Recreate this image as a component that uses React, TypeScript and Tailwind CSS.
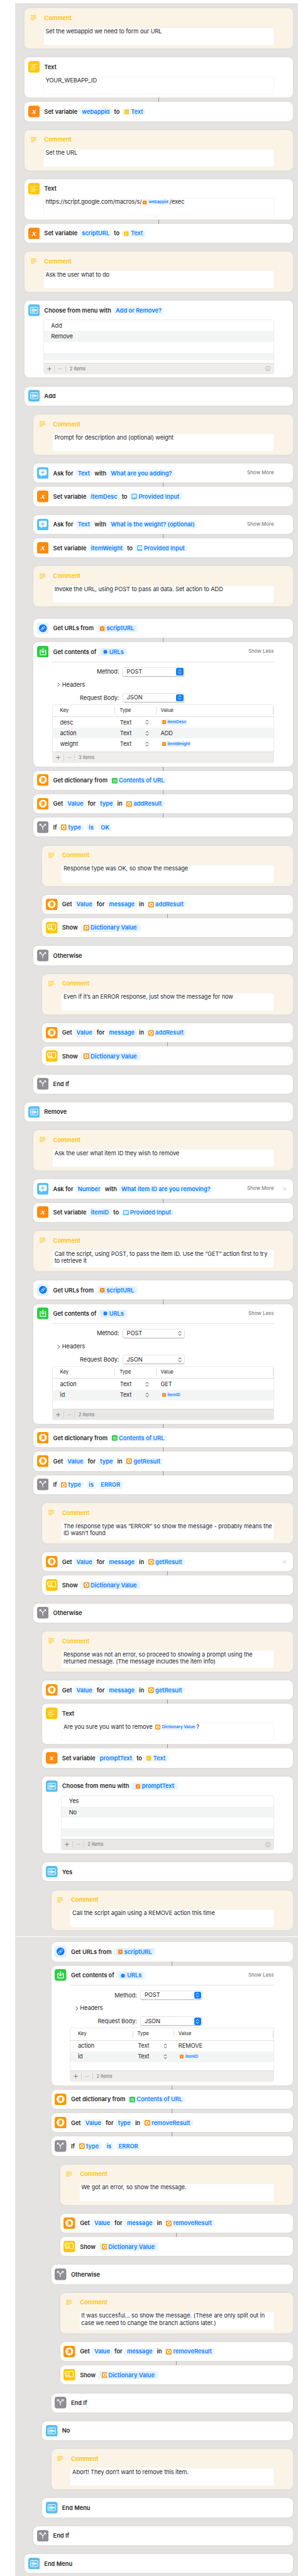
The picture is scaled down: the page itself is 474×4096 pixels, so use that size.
import React from "react";

type IconName = "text" | "x" | "menu" | "ask" | "link" | "download" | "dict" | "branch" | "show";

const tileColors: Record<IconName, string> = {
  text: "#ffc600",
  x: "#fe8a11",
  menu: "#56bff0",
  ask: "#56bff0",
  link: "#e2f0ff",
  download: "#29cd41",
  dict: "#fe9500",
  branch: "#8e8e93",
  show: "#ffc600",
};

function Icon({ name, size }: { name: IconName; size: string }) {
  return (
    <svg viewBox="0 0 26 26" className={`block shrink-0 ${size}`}>
      <rect width="26" height="26" rx="5.5" fill={tileColors[name]} />
      {name === "text" && (
        <g stroke="#fff3c4" strokeWidth="1.7" strokeLinecap="round">
          <path d="M6 7.4h13.5M6 11.3h8.4M6 15.4h13.5M6 19.3h8.4" />
        </g>
      )}
      {name === "x" && (
        <text x="13" y="18.2" textAnchor="middle" fontFamily="Liberation Serif, serif" fontStyle="italic" fontWeight="700" fontSize="18" fill="#fff">
          x
        </text>
      )}
      {name === "menu" && (
        <g>
          <rect x="4.8" y="6.3" width="16.4" height="13.4" rx="1.6" fill="none" stroke="#fff" strokeWidth="1.4" />
          <path d="M8 9.6h6M8 16.6h6" stroke="#fff" strokeWidth="1.1" strokeLinecap="round" />
          <rect x="7" y="11.3" width="12" height="3.5" rx=".8" fill="#fff" />
          <path d="M8 13.1h4" stroke="#9bd8f6" strokeWidth="1.2" />
        </g>
      )}
      {name === "ask" && (
        <g>
          <path d="M7 4.6h12a2.6 2.6 0 0 1 2.6 2.6v8a2.6 2.6 0 0 1-2.6 2.6h-6.6L8.2 21v-3.2H7a2.6 2.6 0 0 1-2.6-2.6v-8A2.6 2.6 0 0 1 7 4.6z" fill="#fff" />
          <path d="M12.6 7.9v7M9.1 11.4h7" stroke="#56bff0" strokeWidth="1.6" strokeLinecap="round" />
        </g>
      )}
      {name === "link" && (
        <g>
          <circle cx="13" cy="12.6" r="8.7" fill="#0a7aff" />
          <g transform="rotate(-45 13 12.6)" fill="none" stroke="#fff" strokeWidth="1.1">
            <rect x="7.6" y="10.8" width="6.4" height="3.8" rx="1.9" />
            <rect x="12" y="10.8" width="6.4" height="3.8" rx="1.9" />
          </g>
        </g>
      )}
      {name === "download" && (
        <g fill="none" stroke="#fff" strokeWidth="1.7" strokeLinecap="round" strokeLinejoin="round">
          <path d="M10 9.5H6.9v10.3h12.4V9.5h-3.1" />
          <path d="M13.1 5.4v9.4M10.2 12.2l2.9 2.9 2.9-2.9" />
        </g>
      )}
      {name === "dict" && (
        <g>
          <circle cx="13" cy="12.6" r="8.7" fill="#fff" />
          <rect x="9.4" y="7.9" width="7.3" height="9.6" rx=".9" fill="#fe9500" />
          <path d="M11.2 8.6v6.6M10.6 16h5.6" stroke="#fff" strokeWidth=".8" />
        </g>
      )}
      {name === "branch" && (
        <g fill="none" stroke="#fff" strokeWidth="1.5" strokeLinecap="round" strokeLinejoin="round">
          <path d="M12.6 18.6v-4.5c0-2.6-2.5-4-5.2-6.6M12.6 14.1c0-2.6 2.5-4 5.2-6.6" />
          <path d="M5.6 9.6V6h3.4zM19.6 9.6V6h-3.4z" fill="#fff" strokeWidth=".8" />
        </g>
      )}
      {name === "show" && (
        <g fill="none" stroke="#fff" strokeWidth="1.5" strokeLinecap="round">
          <path d="M13 4.9h6.6a2 2 0 0 1 2 2v8.4a2 2 0 0 1-2 2h-1.4M5.2 15.5a2 2 0 0 0 1.8 1.8h5" />
          <circle cx="8" cy="9.7" r="4.9" />
          <path d="M11.6 13.2l4.4 4.6" strokeWidth="2" />
          <path d="M5.9 8.8h4.2M5.9 10.9h3" strokeWidth="1" />
        </g>
      )}
    </svg>
  );
}

/** Small icon shown in front of a variable's name. */
function MiniIcon({ name }: { name: IconName }) {
  if (name === "link")
    return (
      <svg viewBox="0 0 9 9" className="block size-[9px] shrink-0">
        <rect width="9" height="9" rx="2" fill="#d3e7ff" />
        <circle cx="4.5" cy="4.5" r="2.9" fill="#0a7aff" />
        <path d="M3.7 5.3l1.6-1.6" stroke="#8fc2ff" strokeWidth=".7" />
      </svg>
    );
  const small = name === "x" || name === "text";
  return (
    <span className="flex size-[9px] shrink-0 items-center justify-center">
      <Icon name={name} size={small ? "size-[7.4px]" : "size-[8.8px]"} />
    </span>
  );
}

const Pill = ({ children }: { children: string }) => (
  <span className="flex h-[13.2px] items-center rounded-[2.5px] bg-[#eff7ff] px-[3.5px] text-[#067aff]">{children}</span>
);

const VarPill = ({ icon, children }: { icon: IconName; children: string }) => (
  <span className="flex h-[10.7px] items-center gap-[2.3px] rounded-[2.5px] bg-[#edf5ff] pr-[4.4px] pl-[3px] text-[#1480ff]">
    <MiniIcon name={icon} />
    {children}
  </span>
);

const NestedPill = ({ icon, children }: { icon: IconName; children: string }) => (
  <span className="flex h-[13.2px] items-center rounded-[2.5px] bg-[#eff7ff] px-[3.5px]">
    <span className="flex h-[10.6px] items-center gap-[1.9px] rounded-[2.5px] bg-[#e1efff] pr-[3px] pl-[2.4px] text-[#0f7dff]">
      <MiniIcon name={icon} />
      {children}
    </span>
  </span>
);

const InlineVar = ({ icon, children }: { icon: IconName; children: string }) => (
  <span className="inline-flex h-[9.4px] items-center gap-[2.5px] rounded-[2px] bg-[#edf5ff] px-[2.1px] align-middle text-[6.6px] leading-none font-semibold tracking-normal text-[#1480ff]">
    <Icon name={icon} size={icon === "dict" ? "size-[8px]" : "size-[6.3px]"} />
    {children}
  </span>
);

const indents = ["ml-[15.4px]", "ml-[29.6px]", "ml-[43.8px]", "ml-[58px]", "ml-[72.2px]"];
const gaps = {
  none: "",
  normal: "mt-[14.2px]",
  wide: "mt-[19.6px]",
  medium: "mt-[15.4px]",
};

type Common = { level?: number; gap?: keyof typeof gaps; linked?: boolean };

const Connector = ({ level }: { level: number }) => (
  <div className={`mr-[8.5px] flex h-[7.1px] shrink-0 justify-center ${indents[level]}`}>
    <div className="w-[1.3px] bg-[#9a9aa0]" />
  </div>
);

function Card({
  level = 0,
  gap = "normal",
  linked,
  height = "h-[30.19px]",
  bg = "bg-white",
  children,
}: Common & { height?: string; bg?: string; children: React.ReactNode }) {
  return (
    <>
      {linked && <Connector level={level} />}
      <section
        className={`mr-[8.5px] flex shrink-0 flex-col rounded-[8px] shadow-[0_0_5px_rgba(0,0,0,0.045)] ${height} ${bg} ${indents[level]} ${linked ? "" : gaps[gap]}`}
      >
        {children}
      </section>
    </>
  );
}

function Header({ icon, toggle, close, children }: { icon: IconName; toggle?: string; close?: boolean; children: React.ReactNode }) {
  return (
    <header className="flex h-[30px] shrink-0 items-center pl-[5.7px]">
      <Icon name={icon} size="size-[18.5px]" />
      <div className="ml-[7.2px] flex items-center gap-[3.6px] pt-[0.8px] text-[9.25px] font-semibold whitespace-nowrap">{children}</div>
      {toggle && <span className="mr-[29.9px] ml-auto text-[7.9px] font-medium text-[#828282]">{toggle}</span>}
      {close && (
        <svg viewBox="0 0 8 8" className={toggle ? "mr-[9.7px] -ml-[16.7px] size-[7px]" : "mr-[9.7px] ml-auto size-[7px]"}>
          <path d="M1 1l6 6M7 1L1 7" stroke="#b9b9b9" strokeWidth=".9" />
        </svg>
      )}
    </header>
  );
}

type RowProps = Common & { icon: IconName; toggle?: string; close?: boolean; children: React.ReactNode };

const Row = ({ icon, toggle, close, children, ...rest }: RowProps) => (
  <Card {...rest}>
    <Header icon={icon} toggle={toggle} close={close}>
      {children}
    </Header>
  </Card>
);

const TextBox = ({ children }: { children: React.ReactNode }) => (
  <div className="mx-[29.9px] h-[28.8px] rounded-[3px] bg-white pt-[0.4px] pl-[3.6px] text-[9.25px] leading-[11.5px] tracking-[-0.08px] whitespace-pre shadow-[inset_0_0_0_0.8px_rgba(0,0,0,0.05)]">
    {children}
  </div>
);

const Comment = ({ children, ...rest }: Common & { children: string }) => (
  <Card {...rest} height="h-[63.9px]" bg="bg-[#fbf4e6]">
    <div className="flex h-[30.2px] shrink-0 items-center pl-[9.7px] text-[#ffc107]">
      <svg viewBox="0 0 9 8" className="h-[8px] w-[9px]">
        <path d="M0 .6h9M0 2.9h9M0 5.2h9M0 7.4h5.5" stroke="currentColor" strokeWidth=".9" />
      </svg>
      <span className="ml-[12.7px] pt-[0.8px] text-[9.25px] font-semibold">Comment</span>
    </div>
    <TextBox>{children}</TextBox>
  </Card>
);

const TextAction = ({ children, ...rest }: Common & { children: React.ReactNode }) => (
  <Card {...rest} height="h-[63.9px]">
    <Header icon="text">
      <span>Text</span>
    </Header>
    <TextBox>{children}</TextBox>
  </Card>
);

function ListFooter({ count, info, dark }: { count: number; info?: boolean; dark?: boolean }) {
  return (
    <div className={`flex h-[17px] shrink-0 items-center border-t-[0.7px] border-[#d9d9d9] text-[7.5px] text-[#6f6f6f] ${dark ? "bg-[#e8e7e6]" : "bg-[#eeedeb]"}`}>
      <span className="flex w-[16.6px] justify-center">
        <svg viewBox="0 0 8 8" className="size-[7px]">
          <path d="M4 .3v7.4M.3 4h7.4" stroke="#666" strokeWidth=".9" />
        </svg>
      </span>
      <span className="h-[11px] w-[1px] bg-[#d2d2d2]" />
      <span className="flex w-[16.8px] justify-center">
        <svg viewBox="0 0 8 8" className="size-[7px]">
          <path d="M.3 4h7.4" stroke="#b8b8b8" strokeWidth=".9" />
        </svg>
      </span>
      <span className="h-[11px] w-[1px] bg-[#d2d2d2]" />
      <span className="ml-[5.6px]">{count} items</span>
      {info && (
        <svg viewBox="0 0 10 10" className="mr-[4.5px] ml-auto size-[8.2px]" fill="none" stroke="#a9a9a9" strokeWidth=".9">
          <circle cx="5" cy="5" r="4.5" />
          <path d="M4.1 4.3H5.1V7.2M3.9 7.3H6.2M4.7 2.7h.7" />
        </svg>
      )}
    </div>
  );
}

function MenuAction({ title, options, dark, ...rest }: Common & { title: React.ReactNode; options: string[]; dark?: boolean }) {
  return (
    <Card {...rest} height="h-[122.15px]">
      <Header icon="menu">
        <span>Choose from menu with</span>
        {title}
      </Header>
      <div className="mx-[29.9px] flex h-[87px] flex-col overflow-hidden rounded-[3px] border-[0.7px] border-[#ececec] text-[9.25px] tracking-[-0.08px]">
        <div className="flex h-[17.1px] items-center pl-[11.4px]">{options[0]}</div>
        <div className="flex h-[17.1px] items-center bg-[#f3f5f5] pl-[11.4px]">{options[1]}</div>
        <div className="h-[17.1px]" />
        <div className="h-[12.8px] bg-[#f3f5f5]" />
        <div className="flex-1" />
        <ListFooter count={2} info dark={dark} />
      </div>
    </Card>
  );
}

const Chevrons = ({ color }: { color: string }) => (
  <svg viewBox="0 0 6 9" className="h-[8.4px] w-[6px]" fill="none" stroke={color} strokeWidth="1" strokeLinecap="round" strokeLinejoin="round">
    <path d="M.9 3.2L3 1l2.1 2.2M.9 5.8L3 8l2.1-2.2" />
  </svg>
);

function Select({ label, value, active }: { label: string; value: string; active: boolean }) {
  return (
    <div className="flex h-[15px] items-center">
      <span className="w-[136.3px] text-right">{label}</span>
      <span className="ml-[5.5px] flex h-[15px] w-[98.6px] items-center justify-between rounded-[3.5px] border-[0.7px] border-[#e3e3e3] border-b-[#bdbdbd] bg-white pr-[1px] pl-[5.6px] shadow-[0_0.5px_0.5px_rgba(0,0,0,0.12)]">
        <span className="pb-[0.5px]">{value}</span>
        <span className={`flex h-[11.6px] w-[11.2px] items-center justify-center rounded-[2.8px] ${active ? "bg-[#0f7fff]" : ""}`}>
          <Chevrons color={active ? "#fff" : "#333"} />
        </span>
      </span>
    </div>
  );
}

type Entry = { name: string; value: React.ReactNode };

function ContentsAction({
  entries,
  active = true,
  dark,
  height,
  tableHeight,
  ...rest
}: Common & { entries: Entry[]; active?: boolean; dark?: boolean; height: string; tableHeight: string }) {
  return (
    <Card {...rest} height={height}>
      <Header icon="download" toggle="Show Less">
        <span>Get contents of</span>
        <NestedPill icon="link">URLs</NestedPill>
      </Header>
      <div className="mx-[29.3px] mt-[0.5px] h-[1.3px] shrink-0 bg-[#e3e3e3]" />
      <div className="mt-[7.5px] mb-[2.5px] flex h-[56.5px] shrink-0 flex-col justify-between text-[9.25px] tracking-[-0.08px]">
        <Select label="Method:" value="POST" active={active} />
        <div className="flex items-center pl-[38px] leading-[12px]">
          <svg viewBox="0 0 5 8" className="mr-[3px] h-[7px] w-[4.6px]" fill="none" stroke="#333" strokeWidth="1">
            <path d="M.6.6L4.2 4 .6 7.4" />
          </svg>
          Headers
        </div>
        <Select label="Request Body:" value="JSON" active={active} />
      </div>
      <div className={`mx-[29.9px] flex shrink-0 flex-col overflow-hidden rounded-[3px] border-[0.7px] border-[#ececec] text-[9.25px] tracking-[-0.08px] ${tableHeight}`}>
        <div className="flex h-[19.6px] shrink-0 items-center border-b-[0.7px] border-[#dedede] text-[7.8px] tracking-normal">
          <span className="w-[98.2px] pl-[11.4px]">Key</span>
          <span className="h-[11.5px] w-[1px] bg-[#dedede]" />
          <span className="w-[64.3px] pl-[6.9px]">Type</span>
          <span className="h-[11.5px] w-[1px] bg-[#dedede]" />
          <span className="flex-1 pl-[6.9px]">Value</span>
          <span className="h-[11.5px] w-[1px] bg-[#dedede]" />
        </div>
        {entries.map((e, i) => (
          <div key={e.name} className={`flex h-[17.1px] shrink-0 items-center ${i % 2 ? "bg-[#f3f5f5]" : ""}`}>
            <span className="w-[106.7px] pl-[11.4px]">{e.name}</span>
            <span className="w-[40.7px]">Text</span>
            <span className="w-[24px]">
              <Chevrons color="#444" />
            </span>
            <span className="flex items-center">{e.value}</span>
          </div>
        ))}
        <div className="flex-1" />
        <ListFooter count={entries.length} dark={dark} />
      </div>
    </Card>
  );
}

const SetVariable = ({ name, source, ...rest }: Common & { name: string; source: "text" | "ask" }) => (
  <Row icon="x" linked {...rest}>
    <span>Set variable</span>
    <Pill>{name}</Pill>
    <span>to</span>
    <VarPill icon={source}>{source === "text" ? "Text" : "Provided Input"}</VarPill>
  </Row>
);

const Ask = ({ type, prompt, close, ...rest }: Common & { type: string; prompt: string; close?: boolean }) => (
  <Row icon="ask" toggle="Show More" close={close} {...rest}>
    <span>Ask for</span>
    <Pill>{type}</Pill>
    <span>with</span>
    <Pill>{prompt}</Pill>
  </Row>
);

const GetUrls = (props: Common) => (
  <Row icon="link" {...props}>
    <span>Get URLs from</span>
    <NestedPill icon="x">scriptURL</NestedPill>
  </Row>
);

const GetDictionary = (props: Common) => (
  <Row icon="dict" linked {...props}>
    <span>Get dictionary from</span>
    <VarPill icon="download">Contents of URL</VarPill>
  </Row>
);

const GetValue = ({ field, from, close, ...rest }: Common & { field: string; from: string; close?: boolean }) => (
  <Row icon="dict" close={close} {...rest}>
    <span>Get</span>
    <Pill>Value</Pill>
    <span>for</span>
    <Pill>{field}</Pill>
    <span>in</span>
    <VarPill icon="dict">{from}</VarPill>
  </Row>
);

const IfType = ({ value, ...rest }: Common & { value: string }) => (
  <Row icon="branch" linked {...rest}>
    <span>If</span>
    <VarPill icon="dict">type</VarPill>
    <span className="ml-[1px]">
      <Pill>is</Pill>
    </span>
    <span className="ml-[1px]">
      <Pill>{value}</Pill>
    </span>
  </Row>
);

const Show = (props: Common) => (
  <Row icon="show" linked {...props}>
    <span>Show</span>
    <NestedPill icon="dict">Dictionary Value</NestedPill>
  </Row>
);

const Label = ({ icon, text, level }: { icon: IconName; text: string; level: number }) => (
  <Row icon={icon} level={level}>
    <span>{text}</span>
  </Row>
);

export default function App() {
  return (
    <div className="flex h-[4096px] w-[474px] flex-col overflow-hidden bg-white pt-[5px] pl-[23.6px] font-['Inter','Liberation_Sans',sans-serif] text-[#262626]">
      <main className="flex flex-1 flex-col bg-[#e4e3e1] pt-[8.4px]">
        <Comment gap="none">Set the webappid we need to form our URL</Comment>
        <TextAction>YOUR_WEBAPP_ID</TextAction>
        <SetVariable name="webappid" source="text" />
        <Comment>Set the URL</Comment>
        <TextAction>
          <span className="tracking-[-0.13px]">https://script.google.com/macros/s/</span>
          <InlineVar icon="x">webappid</InlineVar>/exec
        </TextAction>
        <SetVariable name="scriptURL" source="text" />
        <Comment>Ask the user what to do</Comment>
        <MenuAction title={<Pill>Add or Remove?</Pill>} options={["Add", "Remove"]} />

        <Label icon="menu" text="Add" level={0} />
        <Comment level={1}>Prompt for description and (optional) weight</Comment>
        <Ask level={1} type="Text" prompt="What are you adding?" />
        <SetVariable level={1} name="itemDesc" source="ask" />
        <Ask level={1} type="Text" prompt="What is the weight? (optional)" />
        <SetVariable level={1} name="itemWeight" source="ask" />
        <Comment level={1}>Invoke the URL, using POST to pass all data. Set action to ADD</Comment>
        <GetUrls level={1} gap="wide" />
        <ContentsAction
          level={1}
          linked
          height="h-[197.45px]"
          tableHeight="h-[93.7px]"
          entries={[
            { name: "desc", value: <InlineVar icon="x">itemDesc</InlineVar> },
            { name: "action", value: "ADD" },
            { name: "weight", value: <InlineVar icon="x">itemWeight</InlineVar> },
          ]}
        />
        <GetDictionary level={1} />
        <GetValue level={1} linked field="type" from="addResult" />
        <IfType level={1} value="OK" />
        <Comment level={2}>Response type was OK, so show the message</Comment>
        <GetValue level={2} field="message" from="addResult" />
        <Show level={2} />
        <Label icon="branch" text="Otherwise" level={1} />
        <Comment level={2}>Even if it’s an ERROR response, just show the message for now</Comment>
        <GetValue level={2} field="message" from="addResult" />
        <Show level={2} />
        <Label icon="branch" text="End If" level={1} />

        <Label icon="menu" text="Remove" level={0} />
        <Comment level={1}>Ask the user what item ID they wish to remove</Comment>
        <Ask level={1} type="Number" prompt="What item ID are you removing?" close />
        <SetVariable level={1} name="itemID" source="ask" />
        <Comment level={1}>{"Call the script, using POST, to pass the item ID. Use the “GET” action first to try\nto retrieve it"}</Comment>
        <GetUrls level={1} gap="medium" />
        <ContentsAction
          level={1}
          linked
          active={false}
          dark
          height="h-[190.4px]"
          tableHeight="h-[86.6px]"
          entries={[
            { name: "action", value: "GET" },
            { name: "id", value: <InlineVar icon="x">itemID</InlineVar> },
          ]}
        />
        <GetDictionary level={1} />
        <GetValue level={1} linked field="type" from="getResult" />
        <IfType level={1} value="ERROR" />
        <Comment level={2}>{"The response type was “ERROR” so show the message - probably means the\nID wasn’t found"}</Comment>
        <GetValue level={2} field="message" from="getResult" close />
        <Show level={2} />
        <Label icon="branch" text="Otherwise" level={1} />
        <Comment level={2}>{"Response was not an error, so proceed to showing a prompt using the\nreturned message. (The message includes the item info)"}</Comment>
        <GetValue level={2} field="message" from="getResult" />
        <TextAction level={2} linked>
          Are you sure you want to remove <InlineVar icon="dict">Dictionary Value</InlineVar>?
        </TextAction>
        <SetVariable level={2} name="promptText" source="text" />
        <MenuAction level={2} dark title={<NestedPill icon="x">promptText</NestedPill>} options={["Yes", "No"]} />

        <Label icon="menu" text="Yes" level={2} />
        <Comment level={3}>Call the script again using a REMOVE action this time</Comment>
        <div className="mt-[9.2px] mb-[8.8px] h-[1px] shrink-0 bg-white" />
        <GetUrls level={3} gap="none" />
        <ContentsAction
          level={3}
          linked
          height="h-[190px]"
          tableHeight="h-[86.3px]"
          entries={[
            { name: "action", value: "REMOVE" },
            { name: "id", value: <InlineVar icon="x">itemID</InlineVar> },
          ]}
        />
        <GetDictionary level={3} />
        <GetValue level={3} linked field="type" from="removeResult" />
        <IfType level={3} value="ERROR" />
        <Comment level={4}>We got an error, so show the message.</Comment>
        <GetValue level={4} field="message" from="removeResult" />
        <Show level={4} />
        <Label icon="branch" text="Otherwise" level={3} />
        <Comment level={4}>{"It was succesful... so show the message. (These are only split out in\ncase we need to change the branch actions later.)"}</Comment>
        <GetValue level={4} field="message" from="removeResult" />
        <Show level={4} />
        <Label icon="branch" text="End If" level={3} />
        <Label icon="menu" text="No" level={2} />
        <Comment level={3}>Abort! They don’t want to remove this item.</Comment>
        <Label icon="menu" text="End Menu" level={2} />
        <Label icon="branch" text="End If" level={1} />
        <Label icon="menu" text="End Menu" level={0} />
      </main>
    </div>
  );
}
